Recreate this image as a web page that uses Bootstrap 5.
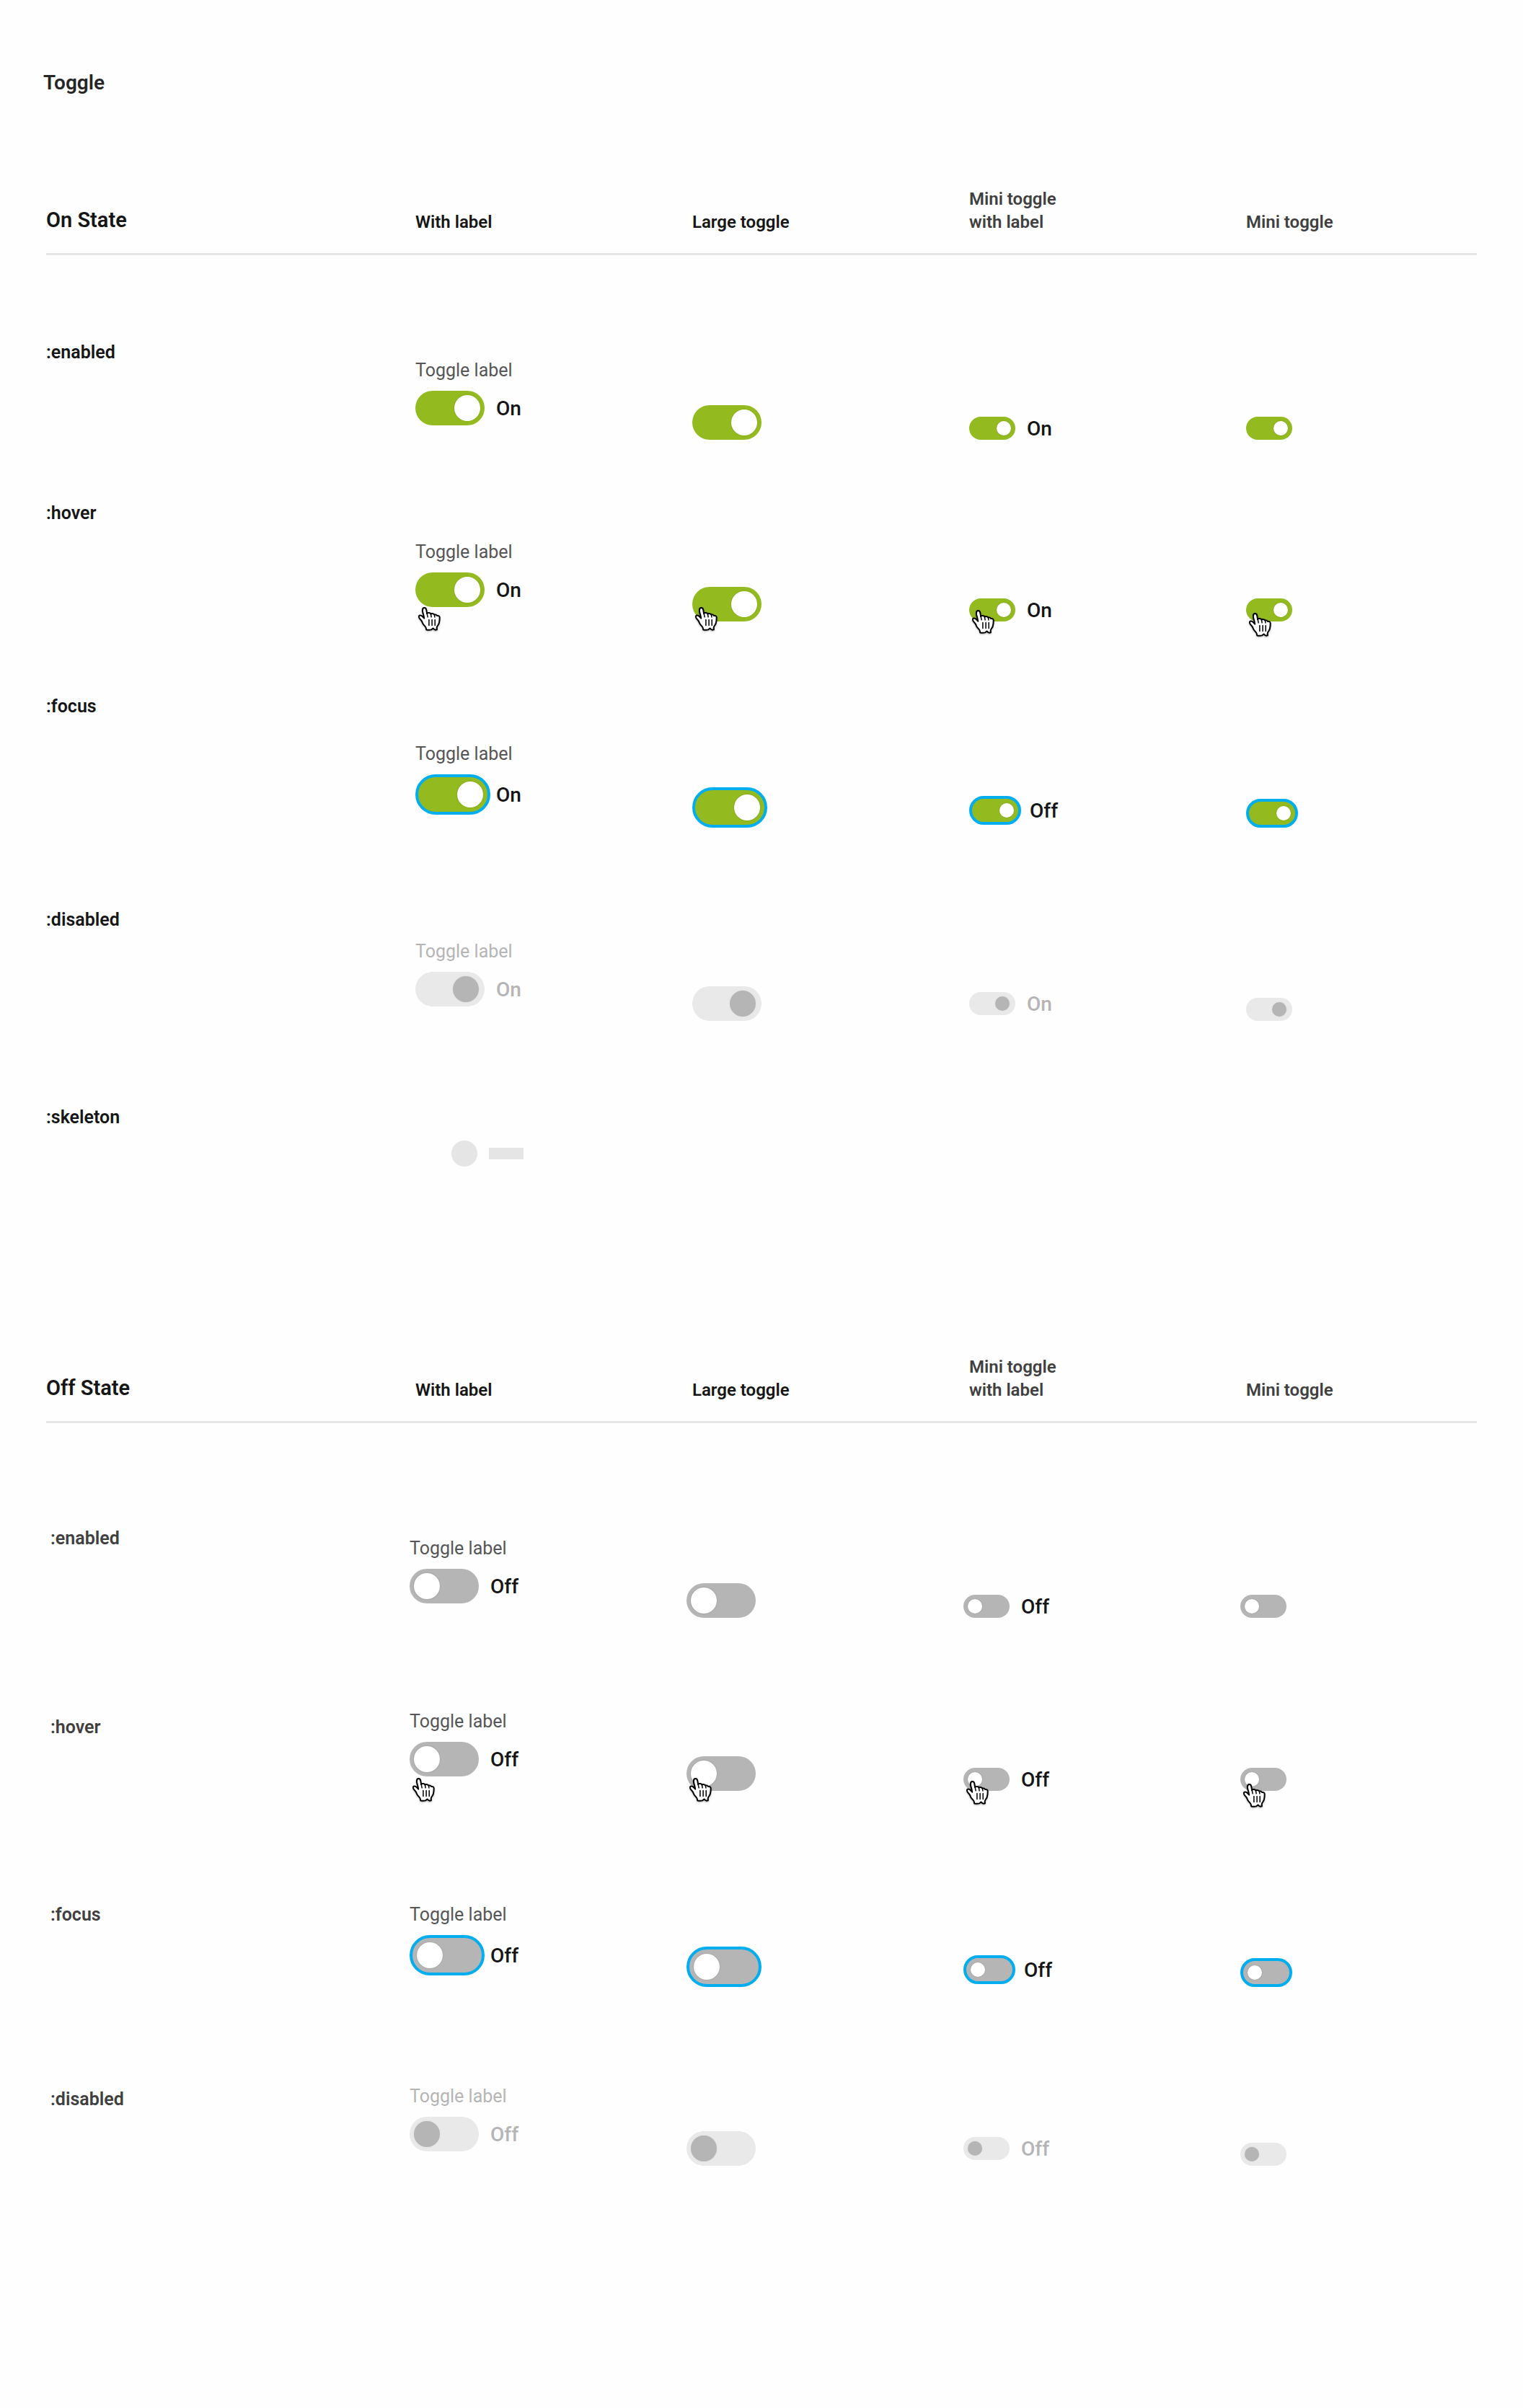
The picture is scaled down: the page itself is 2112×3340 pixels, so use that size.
<!DOCTYPE html>
<html lang="en">
<head>
<meta charset="utf-8">
<meta name="viewport" content="width=device-width, initial-scale=1">
<title>Toggle</title>
<link href="https://cdn.jsdelivr.net/npm/bootstrap@5.3.0/dist/css/bootstrap.min.css" rel="stylesheet">
<style>
  :root { --ink: #161616; --ink-soft: #404040; --ink-label: #565656; --muted: #b5b5b5; --on: #93bb20; --ring: #00aeef; --pale: #e9e9e9; }
  body { font-family: Roboto, "Liberation Sans", sans-serif; color: var(--ink); background: #fefefe; }
  .spec-sheet { padding: 97px 64px 0; }
  .sheet-title { font-size: 28px; line-height: 36px; font-weight: 600; color: #262626; margin: 0 0 127px -4px; }

  /* five columns shared by the header and every state row */
  .spec-grid { display: grid; grid-template-columns: 8fr 6fr 6fr 6fr 5fr; }
  .spec-head { align-items: end; padding-bottom: 27px; border-bottom: 3px solid #e6e6e6; font-size: 24px; line-height: 32px; font-weight: 600; }
  .spec-head h2 { font-size: 29px; line-height: 32px; font-weight: 600; margin: 0; padding-bottom: 3px; }
  .spec-head .soft { color: var(--ink-soft); }
  .on-body { padding-top: 119px; }
  .off-body { padding-top: 144px; }
  .state-name { font-size: 25px; line-height: 32px; font-weight: 600; margin: 0; padding-top: var(--name-gap, 0px); }
  .off-body .state-name { color: var(--ink-soft); padding-left: 6px; }
  .off-body .toggle-cell { margin-left: -8px; }

  /* row rhythm */
  .state-row { min-height: var(--row); --large: 20px; --mini: 36px; --solo: 36px; --cursor: 48px; }
  .on-body .is-enabled { --row: 223px; --lead: 27px; }
  .on-body .is-hover { --row: 268px; --lead: 56px; }
  .on-body .is-focus { --row: 296px; --lead: 68px; --large: 18px; --mini: 30px; --solo: 34px; }
  .on-body .is-disabled { --row: 274px; --lead: 46px; }
  .on-body .is-skeleton { --row: 346px; }
  .off-body .is-enabled { --row: 256px; --lead: 16px; }
  .off-body .is-hover { --row: 266px; --lead: 0px; --name-gap: 6px; --cursor: 50px; }
  .off-body .is-focus { --row: 254px; --lead: 2px; --large: 16px; --mini: 28px; --solo: 32px; }
  .off-body .is-disabled { --row: 446px; --lead: 0px; --name-gap: 2px; }
  .state-row.is-disabled { --mini: 28px; }

  .toggle-cell { padding-top: calc(var(--lead) + 42px + var(--drop, 0px)); }
  .cell-label { padding-top: var(--lead); }
  .cell-large { --drop: var(--large); }
  .cell-mini { --drop: var(--mini); }
  .cell-solo { --drop: var(--solo); }

  .toggle-caption { display: block; font-size: 25px; line-height: 28px; color: var(--ink-label); margin-bottom: 14px; }
  .toggle-text { font-size: 28px; line-height: 30px; font-weight: 500; padding-top: 2px; }
  .toggle-line { display: flex; align-items: center; gap: 16px; }
  .is-focus .cell-label .toggle-line { gap: 8px; }
  .is-focus .cell-mini .toggle-line { gap: 12px; }
  .track { position: relative; display: flex; }

  .switch-input { --w: 96px; --h: 48px; --knob: 36px; appearance: none; display: flex; align-items: center; flex: none; box-sizing: content-box; width: calc(var(--w) - 12px); height: var(--h); margin: 0; padding: 0 6px; border-radius: 60px; background: var(--muted); }
  .switch-input::before { content: ""; width: var(--knob); height: var(--knob); border-radius: 50%; background: #fff; box-shadow: 0 0 2px rgba(0,0,0,.2); }
  .switch-input:checked { background: var(--on); justify-content: flex-end; }
  .cell-mini .switch-input, .cell-solo .switch-input { --w: 64px; --h: 32px; --knob: 20px; }
  .is-focus .switch-input { border: 4px solid var(--ring); }
  .switch-input:disabled { background: var(--pale); }
  .switch-input:disabled:checked { padding: 0 8px 0 4px; }
  .switch-input:disabled::before { background: var(--muted); box-shadow: 0 0 2px rgba(0,0,0,.08); }
  .is-disabled .toggle-caption, .is-disabled .toggle-text { color: var(--muted); }

  .hand { position: absolute; left: 4px; top: var(--cursor); width: 32px; height: 36px; filter: drop-shadow(0 1px 1px rgba(0,0,0,.3)); pointer-events: none; }
  .cell-large .hand { top: calc(var(--cursor) - 20px); }
  .cell-mini .hand { top: calc(var(--cursor) - 32px); }
  .cell-solo .hand { top: calc(var(--cursor) - 28px); }

  .skeleton-line { padding: 48px 0 0 50px; }
  .skeleton-dot { width: 36px; height: 36px; background: #e5e5e5; }
  .skeleton-bar { width: 48px; height: 16px; background: #e5e5e5; }
</style>
</head>
<body>
<svg class="d-none" aria-hidden="true">
  <symbol id="hand" viewBox="0 0 32 36">
    <path fill="#fff" stroke="#000" stroke-width="2" stroke-linejoin="round" d="M11.2 31.4c-.2-1.3-.3-2.6-1-3.7-.9-1.3-2.900-3.200-3.800-4.800-.8-1.400-.9-2.300-1.700-3.500-.9-1.300-2.500-2.900-3.200-4.200-.6-1.200-.9-2.200-.3-3 .7-.9 2-1 3.500-.1 1.300.8 2.400 2.200 3.500 3.600-.3-2.100-.5-3.500-1.100-5.400-.5-1.700-1.200-3.200-1.200-5.200-.1-2.100.7-3.900 2.500-4 2-.1 2.700 1.700 3 3.600.2 1.700.5 2.900.7 4.400.9-1.400 4.600-1.400 5.300.5 1.600-.9 4.400-.6 5 1.200 1.500-.6 3.100-.2 3.700 1.300 2.200-.4 3.600.5 3.600 2.700 0 3.300-.2 5.300-1 7.800-.8 2.400-2.600 3.700-2.900 5.600-.1 1.100 0 2.200.1 3.200-1.100.3-2.200.3-3.300 0-.9-.3-1.600-2-2.100-2s-1.300 1.700-2.400 2c-1.600.4-4.600.3-6.900 0z"/>
    <path fill="none" stroke="#000" stroke-width="1.500" stroke-linecap="round" d="M12.100 8.800l1.100 5M17.400 9.600l.7 4.200M22.400 10.600l.5 3.400M14.900 17.500v8M19.100 17.500v8M23.200 17.500v8"/>
  </symbol>
</svg>

<main class="spec-sheet">
  <h1 class="sheet-title">Toggle</h1>

  <section>
    <header class="spec-grid spec-head">
      <h2>On State</h2>
      <div>With label</div>
      <div>Large toggle</div>
      <div class="soft">Mini toggle<br>with label</div>
      <div class="soft">Mini toggle</div>
    </header>
    <div class="on-body">
      <div class="spec-grid state-row is-enabled">
        <h3 class="state-name">:enabled</h3>
        <div class="toggle-cell cell-label">
          <label class="toggle-caption" for="on-enabled">Toggle label</label>
          <div class="toggle-line"><span class="track"><input class="switch-input" type="checkbox" role="switch" id="on-enabled" checked></span><label class="toggle-text" for="on-enabled">On</label></div>
        </div>
        <div class="toggle-cell cell-large"><div class="toggle-line"><span class="track"><input class="switch-input" type="checkbox" role="switch" aria-label="Large toggle" checked></span></div></div>
        <div class="toggle-cell cell-mini"><div class="toggle-line"><span class="track"><input class="switch-input" type="checkbox" role="switch" id="on-enabled-mini" checked></span><label class="toggle-text" for="on-enabled-mini">On</label></div></div>
        <div class="toggle-cell cell-solo"><div class="toggle-line"><span class="track"><input class="switch-input" type="checkbox" role="switch" aria-label="Mini toggle" checked></span></div></div>
      </div>

      <div class="spec-grid state-row is-hover">
        <h3 class="state-name">:hover</h3>
        <div class="toggle-cell cell-label">
          <label class="toggle-caption" for="on-hover">Toggle label</label>
          <div class="toggle-line"><span class="track"><input class="switch-input" type="checkbox" role="switch" id="on-hover" checked><svg class="hand" aria-hidden="true"><use href="#hand"/></svg></span><label class="toggle-text" for="on-hover">On</label></div>
        </div>
        <div class="toggle-cell cell-large"><div class="toggle-line"><span class="track"><input class="switch-input" type="checkbox" role="switch" aria-label="Large toggle" checked><svg class="hand" aria-hidden="true"><use href="#hand"/></svg></span></div></div>
        <div class="toggle-cell cell-mini"><div class="toggle-line"><span class="track"><input class="switch-input" type="checkbox" role="switch" id="on-hover-mini" checked><svg class="hand" aria-hidden="true"><use href="#hand"/></svg></span><label class="toggle-text" for="on-hover-mini">On</label></div></div>
        <div class="toggle-cell cell-solo"><div class="toggle-line"><span class="track"><input class="switch-input" type="checkbox" role="switch" aria-label="Mini toggle" checked><svg class="hand" aria-hidden="true"><use href="#hand"/></svg></span></div></div>
      </div>

      <div class="spec-grid state-row is-focus">
        <h3 class="state-name">:focus</h3>
        <div class="toggle-cell cell-label">
          <label class="toggle-caption" for="on-focus">Toggle label</label>
          <div class="toggle-line"><span class="track"><input class="switch-input" type="checkbox" role="switch" id="on-focus" checked></span><label class="toggle-text" for="on-focus">On</label></div>
        </div>
        <div class="toggle-cell cell-large"><div class="toggle-line"><span class="track"><input class="switch-input" type="checkbox" role="switch" aria-label="Large toggle" checked></span></div></div>
        <div class="toggle-cell cell-mini"><div class="toggle-line"><span class="track"><input class="switch-input" type="checkbox" role="switch" id="on-focus-mini" checked></span><label class="toggle-text" for="on-focus-mini">Off</label></div></div>
        <div class="toggle-cell cell-solo"><div class="toggle-line"><span class="track"><input class="switch-input" type="checkbox" role="switch" aria-label="Mini toggle" checked></span></div></div>
      </div>

      <div class="spec-grid state-row is-disabled">
        <h3 class="state-name">:disabled</h3>
        <div class="toggle-cell cell-label">
          <label class="toggle-caption" for="on-disabled">Toggle label</label>
          <div class="toggle-line"><span class="track"><input class="switch-input" type="checkbox" role="switch" id="on-disabled" checked disabled></span><label class="toggle-text" for="on-disabled">On</label></div>
        </div>
        <div class="toggle-cell cell-large"><div class="toggle-line"><span class="track"><input class="switch-input" type="checkbox" role="switch" aria-label="Large toggle" checked disabled></span></div></div>
        <div class="toggle-cell cell-mini"><div class="toggle-line"><span class="track"><input class="switch-input" type="checkbox" role="switch" id="on-disabled-mini" checked disabled></span><label class="toggle-text" for="on-disabled-mini">On</label></div></div>
        <div class="toggle-cell cell-solo"><div class="toggle-line"><span class="track"><input class="switch-input" type="checkbox" role="switch" aria-label="Mini toggle" checked disabled></span></div></div>
      </div>

      <div class="spec-grid state-row is-skeleton">
        <h3 class="state-name">:skeleton</h3>
        <div class="skeleton-line d-flex align-items-center align-self-start gap-3">
          <span class="skeleton-dot rounded-circle"></span><span class="skeleton-bar"></span>
        </div>
      </div>
    </div>
  </section>

  <section>
    <header class="spec-grid spec-head">
      <h2>Off State</h2>
      <div>With label</div>
      <div>Large toggle</div>
      <div class="soft">Mini toggle<br>with label</div>
      <div class="soft">Mini toggle</div>
    </header>
    <div class="off-body">
      <div class="spec-grid state-row is-enabled">
        <h3 class="state-name">:enabled</h3>
        <div class="toggle-cell cell-label">
          <label class="toggle-caption" for="off-enabled">Toggle label</label>
          <div class="toggle-line"><span class="track"><input class="switch-input" type="checkbox" role="switch" id="off-enabled"></span><label class="toggle-text" for="off-enabled">Off</label></div>
        </div>
        <div class="toggle-cell cell-large"><div class="toggle-line"><span class="track"><input class="switch-input" type="checkbox" role="switch" aria-label="Large toggle"></span></div></div>
        <div class="toggle-cell cell-mini"><div class="toggle-line"><span class="track"><input class="switch-input" type="checkbox" role="switch" id="off-enabled-mini"></span><label class="toggle-text" for="off-enabled-mini">Off</label></div></div>
        <div class="toggle-cell cell-solo"><div class="toggle-line"><span class="track"><input class="switch-input" type="checkbox" role="switch" aria-label="Mini toggle"></span></div></div>
      </div>

      <div class="spec-grid state-row is-hover">
        <h3 class="state-name">:hover</h3>
        <div class="toggle-cell cell-label">
          <label class="toggle-caption" for="off-hover">Toggle label</label>
          <div class="toggle-line"><span class="track"><input class="switch-input" type="checkbox" role="switch" id="off-hover"><svg class="hand" aria-hidden="true"><use href="#hand"/></svg></span><label class="toggle-text" for="off-hover">Off</label></div>
        </div>
        <div class="toggle-cell cell-large"><div class="toggle-line"><span class="track"><input class="switch-input" type="checkbox" role="switch" aria-label="Large toggle"><svg class="hand" aria-hidden="true"><use href="#hand"/></svg></span></div></div>
        <div class="toggle-cell cell-mini"><div class="toggle-line"><span class="track"><input class="switch-input" type="checkbox" role="switch" id="off-hover-mini"><svg class="hand" aria-hidden="true"><use href="#hand"/></svg></span><label class="toggle-text" for="off-hover-mini">Off</label></div></div>
        <div class="toggle-cell cell-solo"><div class="toggle-line"><span class="track"><input class="switch-input" type="checkbox" role="switch" aria-label="Mini toggle"><svg class="hand" aria-hidden="true"><use href="#hand"/></svg></span></div></div>
      </div>

      <div class="spec-grid state-row is-focus">
        <h3 class="state-name">:focus</h3>
        <div class="toggle-cell cell-label">
          <label class="toggle-caption" for="off-focus">Toggle label</label>
          <div class="toggle-line"><span class="track"><input class="switch-input" type="checkbox" role="switch" id="off-focus"></span><label class="toggle-text" for="off-focus">Off</label></div>
        </div>
        <div class="toggle-cell cell-large"><div class="toggle-line"><span class="track"><input class="switch-input" type="checkbox" role="switch" aria-label="Large toggle"></span></div></div>
        <div class="toggle-cell cell-mini"><div class="toggle-line"><span class="track"><input class="switch-input" type="checkbox" role="switch" id="off-focus-mini"></span><label class="toggle-text" for="off-focus-mini">Off</label></div></div>
        <div class="toggle-cell cell-solo"><div class="toggle-line"><span class="track"><input class="switch-input" type="checkbox" role="switch" aria-label="Mini toggle"></span></div></div>
      </div>

      <div class="spec-grid state-row is-disabled">
        <h3 class="state-name">:disabled</h3>
        <div class="toggle-cell cell-label">
          <label class="toggle-caption" for="off-disabled">Toggle label</label>
          <div class="toggle-line"><span class="track"><input class="switch-input" type="checkbox" role="switch" id="off-disabled" disabled></span><label class="toggle-text" for="off-disabled">Off</label></div>
        </div>
        <div class="toggle-cell cell-large"><div class="toggle-line"><span class="track"><input class="switch-input" type="checkbox" role="switch" aria-label="Large toggle" disabled></span></div></div>
        <div class="toggle-cell cell-mini"><div class="toggle-line"><span class="track"><input class="switch-input" type="checkbox" role="switch" id="off-disabled-mini" disabled></span><label class="toggle-text" for="off-disabled-mini">Off</label></div></div>
        <div class="toggle-cell cell-solo"><div class="toggle-line"><span class="track"><input class="switch-input" type="checkbox" role="switch" aria-label="Mini toggle" disabled></span></div></div>
      </div>
    </div>
  </section>
</main>
<script src="https://cdn.jsdelivr.net/npm/bootstrap@5.3.0/dist/js/bootstrap.bundle.min.js"></script>
</body>
</html>
